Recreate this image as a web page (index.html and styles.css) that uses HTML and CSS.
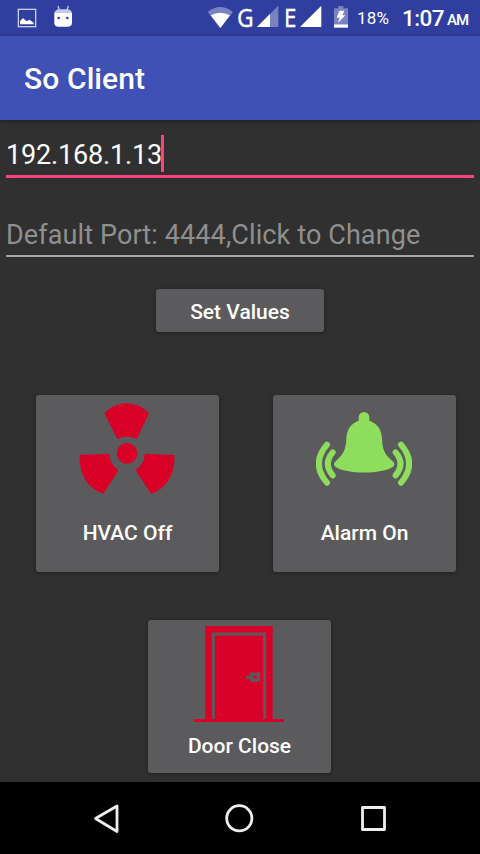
FILE: index.html
```html
<!DOCTYPE html>
<html lang="en">
<head>
<meta charset="utf-8">
<title>So Client</title>
<link rel="stylesheet" href="styles.css">
</head>
<body>
<div class="status">
  <svg class="notices" width="80" height="36" viewBox="0 0 240 108">
    <rect x="55" y="28" width="52" height="52" fill="none" stroke="#c9cdea" stroke-width="4"/>
    <path d="M60 73V64L69 54L80 64L88 59L101 68V73Z" fill="#fff"/>
    <path d="M174 18L179 34M205 18L200 34" stroke="#c5cae9" stroke-width="4"/>
    <path d="M163 38V68Q163 80 176 80H202Q216 80 216 68V38Z" fill="#fff"/>
    <path d="M163 39Q165 29 178 28H201Q214 29 216 39Z" fill="#c5cae9"/>
    <circle cx="176" cy="54" r="4" fill="#303f9f"/><circle cx="202" cy="54" r="4" fill="#303f9f"/>
  </svg>
  <svg class="radio" width="28" height="36" viewBox="0 0 84 108">
    <path d="M23 36Q61 6 99 36L61 84Z" transform="translate(-18)" fill="#7a83c1"/>
    <path d="M32 46Q61 30 90 46L61 84Z" transform="translate(-18)" fill="#fff"/>
  </svg>
  <span class="net net-g">G</span>
  <svg class="bars bars-g" width="22" height="36" viewBox="0 0 66 108">
    <path d="M0 81L64 17V81Z" fill="#7a83c1"/><path d="M0 81L39 42V81Z" fill="#fff"/>
  </svg>
  <span class="net net-e">E</span>
  <svg class="bars bars-e" width="22" height="36" viewBox="0 0 66 108"><path d="M0 81L64 17V81Z" fill="#fff"/></svg>
  <svg class="battery" width="14" height="36" viewBox="0 0 42 108">
    <path d="M0 25H13V18H28V25H42V73H0Z" fill="#7a83c1"/>
    <path d="M0 73H42V83H0Z" fill="#fff"/>
    <path d="M16 32H31L25 46H34L12 69L17 53H8Z" fill="#fff"/>
  </svg>
  <span class="percent">18%</span>
  <span class="clock">1:07</span><span class="ampm">AM</span>
</div>
<header class="appbar"><h1>So Client</h1></header>
<main class="content">
  <div class="field focused"><span>192.168.1.13</span><i class="caret"></i></div>
  <div class="field hint"><span>Default Port: 4444,Click to Change</span></div>
  <button class="btn set">Set Values</button>
  <div class="row">
    <button class="btn card">
      <svg width="96" height="96" viewBox="57 33 288 288" fill="#d90027">
        <path d="M133 70Q162 40 200 40Q238 40 267 70L230 147Q200 134 172 147Z"/>
        <path d="M58 195L148 191Q148 222 176 240L130 312Q58 285 58 195Z"/>
        <path d="M344 195L254 191Q254 222 226 240L274 312Q344 285 344 195Z"/>
        <circle cx="201" cy="190" r="31"/>
      </svg>
      <span>HVAC Off</span>
    </button>
    <button class="btn card">
      <svg width="96" height="96" viewBox="48 33 288 288" fill="#8fdd5c">
        <path d="M176 92V82A16 16 0 0 1 208 82V92C232 100 245 118 246 146C247 178 254 193 278 214Q288 224 278 231C247 253 138 253 107 231Q97 224 107 214C130 193 138 178 139 146C140 118 153 100 176 92Z"/>
        <g fill="none" stroke="#8fdd5c" stroke-width="18" stroke-linecap="round">
          <path d="M98 187Q69 221 98 256M81 164Q32 221 81 278M287 187Q316 221 287 256M303 164Q352 221 303 278"/>
        </g>
      </svg>
      <span>Alarm On</span>
    </button>
  </div>
  <button class="btn card door">
    <svg width="96" height="96" viewBox="153 48 288 288">
      <path d="M196 48H398V327H427Q432 327 432 332V336H162V332Q162 327 167 327H196Z" fill="#d90027"/>
      <path d="M220 327V72H374V327" fill="none" stroke="#5b5b5d" stroke-width="9"/>
      <path d="M318 202H334M335 192H355V211H335Z" fill="none" stroke="#5b5b5d" stroke-width="9"/>
    </svg>
    <span>Door Close</span>
  </button>
</main>
<nav class="navbar">
  <svg width="480" height="72" viewBox="0 0 480 72" fill="none" stroke="#eee" stroke-width="2.800" stroke-linejoin="round">
    <path d="M95.500 36.500L117 24V49.500Z"/>
    <circle cx="239.300" cy="36.300" r="12.600"/>
    <rect x="362.500" y="25.500" width="22" height="22"/>
  </svg>
</nav>
</body>
</html>
```
FILE: styles.css
```css
* { box-sizing: border-box; }
body {
  margin: 0;
  width: 480px;
  height: 854px;
  display: flex;
  flex-direction: column;
  overflow: hidden;
  background: #303030;
  color: #fff;
  font-family: Roboto, sans-serif;
}
svg { display: block; flex: none; }
.status {
  height: 36px;
  flex: none;
  display: flex;
  background: #303f9f;
  line-height: 36px;
  white-space: nowrap;
}
.radio { margin-left: 126px; }
.net { flex: none; font: 26px/34px "Noto Sans", sans-serif; transform-origin: left; -webkit-text-stroke: .3px #fff; }
.net-g { width: 20px; margin-left: 3px; transform: scaleX(.88); }
.net-e { width: 16px; margin-left: 5px; transform: scaleX(.86); }
.bars-e { margin-left: 0; }
.battery { margin-left: 12px; }
.percent { width: 45px; flex: none; margin-left: 9px; font-size: 17px; letter-spacing: .2px; }
.clock { width: 44px; flex: none; font-size: 22.5px; font-weight: 500; line-height: 37px; letter-spacing: -.6px; }
.ampm { margin-left: 1px; font-size: 15px; font-weight: 500; line-height: 41px; letter-spacing: -1px; }
.appbar {
  height: 84px;
  flex: none;
  padding-left: 24px;
  background: #3f51b5;
  box-shadow: 0 1px 4px rgba(0, 0, 0, .4);
}
h1 { margin: 0; font-size: 30px; font-weight: 500; line-height: 85px; letter-spacing: .1px; }
.content { flex: 1; display: flex; flex-direction: column; align-items: center; }
.field {
  width: 468px;
  height: 43px;
  display: flex;
  flex: none;
  font-size: 27px;
  line-height: 41px;
}
.focused { margin-top: 15px; border-bottom: 3px solid #ff4081; letter-spacing: -.15px; }
.caret { width: 3px; height: 37px; margin-left: -1px; background: #ff4081; }
.hint { height: 42px; margin-top: 37px; border-bottom: 2px solid #a5a5a5; color: #8f8f8f; letter-spacing: .11px; }
.btn {
  border: 0;
  border-radius: 3px;
  padding: 0;
  background: #5b5b5d;
  box-shadow: 0 1px 4px rgba(0, 0, 0, .35);
  color: #fff;
  font: 500 21px/25px Roboto, sans-serif;
  flex: none;
}
.set { width: 168px; height: 43px; margin-top: 32px; padding-top: 4px; }
.row {
  width: 420px;
  margin-top: 63px;
  margin-left: 36px;
  display: flex;
  align-self: flex-start;
  justify-content: space-between;
}
.card {
  width: 183px;
  height: 177px;
  padding-top: 6px;
  display: flex;
  flex-direction: column;
  align-items: center;
}
.card svg { margin-right: 1px; }
.card span { margin-top: 24px; }
.door { height: 153px; margin-top: 48px; margin-right: 1px; }
.door span { margin-top: 12px; }
.navbar { height: 72px; flex: none; background: #000; }
```
